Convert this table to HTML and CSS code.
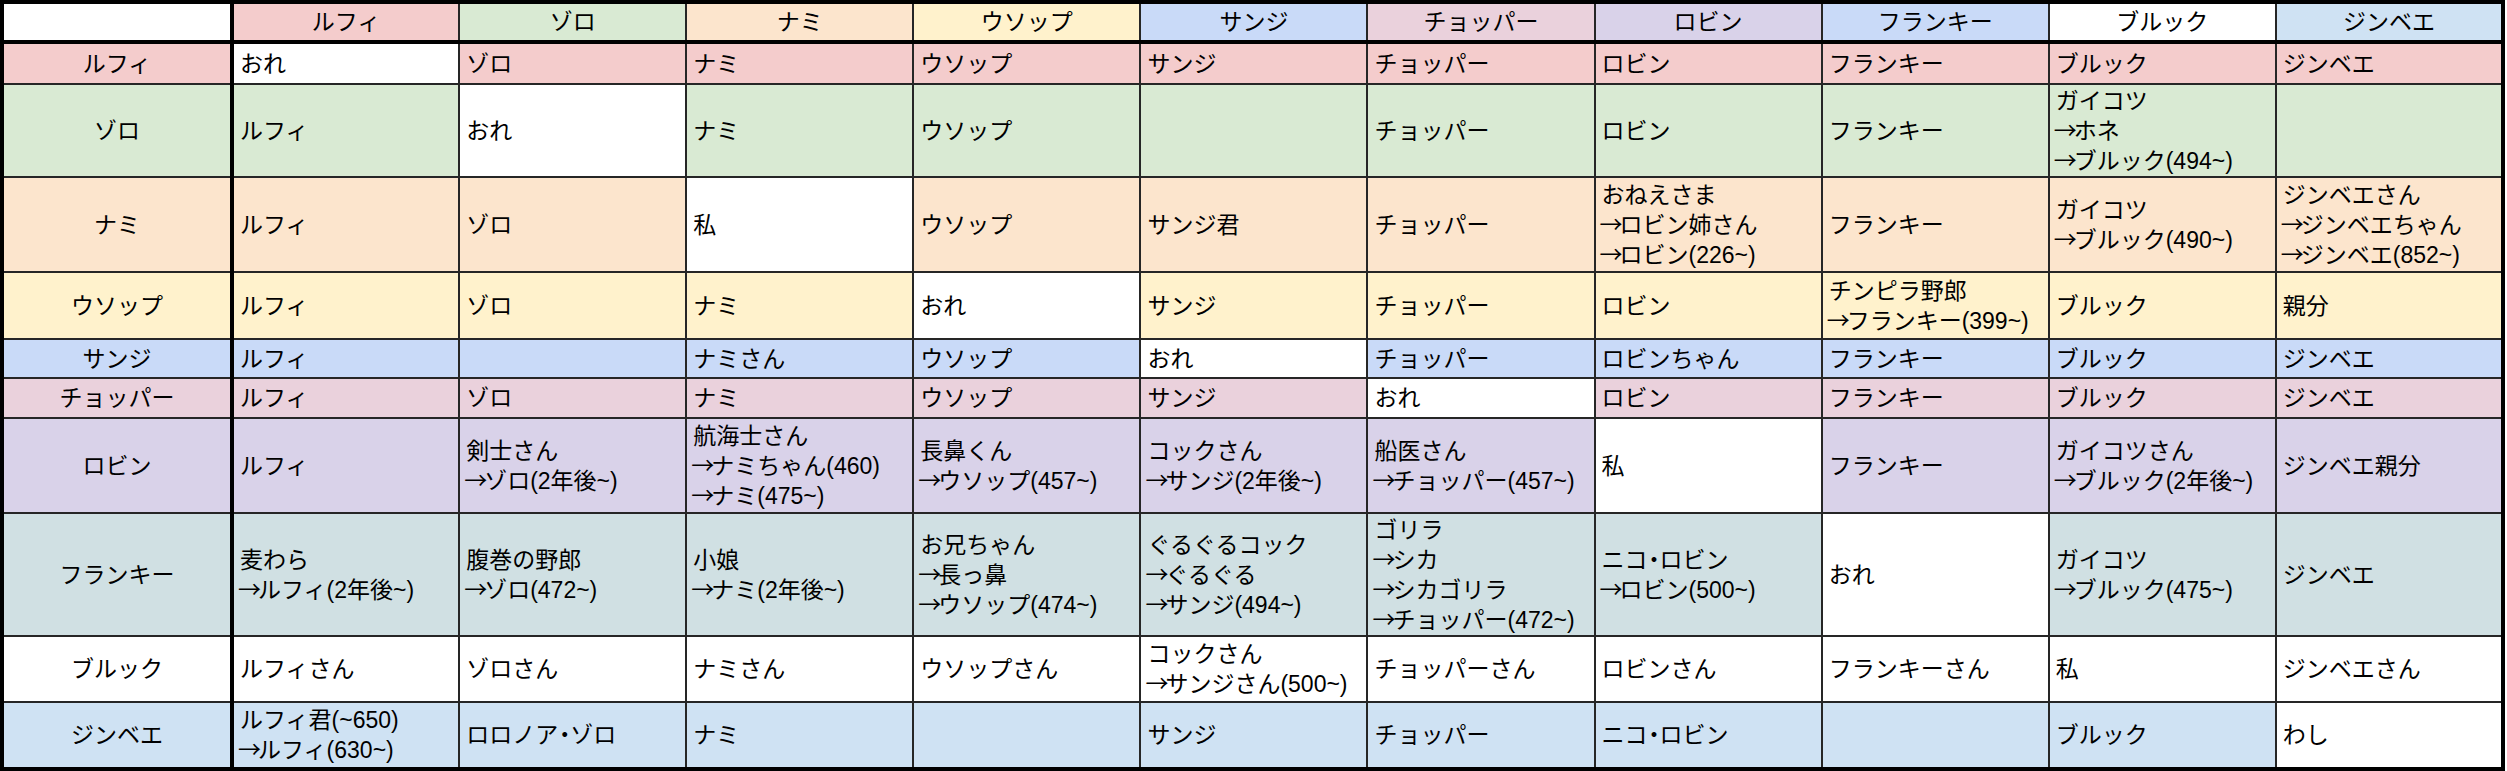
FILE: index.html
```html
<!DOCTYPE html>
<html lang="ja">
<head>
<meta charset="utf-8">
<title>呼び方表</title>
<link rel="stylesheet" href="styles.css">
</head>
<body>
<table class="grid">
  <colgroup>
    <col class="col-head">
    <col class="col"><col class="col"><col class="col"><col class="col"><col class="col">
    <col class="col"><col class="col"><col class="col"><col class="col"><col class="col">
  </colgroup>
  <thead>
    <tr class="h0">
      <th class="corner"></th>
      <th class="luffy">ルフィ</th>
      <th class="zoro">ゾロ</th>
      <th class="nami">ナミ</th>
      <th class="usopp">ウソップ</th>
      <th class="sanji">サンジ</th>
      <th class="chopper">チョッパー</th>
      <th class="robin">ロビン</th>
      <th class="franky-h">フランキー</th>
      <th class="brook">ブルック</th>
      <th class="jinbe">ジンベエ</th>
    </tr>
  </thead>
  <tbody>
    <tr class="h1 luffy">
      <th>ルフィ</th>
      <td class="self">おれ</td><td>ゾロ</td><td>ナミ</td><td>ウソップ</td><td>サンジ</td><td>チョッパー</td><td>ロビン</td><td>フランキー</td><td>ブルック</td><td>ジンベエ</td>
    </tr>
    <tr class="h2 zoro">
      <th>ゾロ</th>
      <td>ルフィ</td><td class="self">おれ</td><td>ナミ</td><td>ウソップ</td><td></td><td>チョッパー</td><td>ロビン</td><td>フランキー</td><td>ガイコツ<br><span class="ar">→</span>ホネ<br><span class="ar">→</span>ブルック(494~)</td><td></td>
    </tr>
    <tr class="h3 nami">
      <th>ナミ</th>
      <td>ルフィ</td><td>ゾロ</td><td class="self">私</td><td>ウソップ</td><td>サンジ君</td><td>チョッパー</td><td>おねえさま<br><span class="ar">→</span>ロビン姉さん<br><span class="ar">→</span>ロビン(226~)</td><td>フランキー</td><td>ガイコツ<br><span class="ar">→</span>ブルック(490~)</td><td>ジンベエさん<br><span class="ar">→</span>ジンベエちゃん<br><span class="ar">→</span>ジンベエ(852~)</td>
    </tr>
    <tr class="h4 usopp">
      <th>ウソップ</th>
      <td>ルフィ</td><td>ゾロ</td><td>ナミ</td><td class="self">おれ</td><td>サンジ</td><td>チョッパー</td><td>ロビン</td><td>チンピラ野郎<br><span class="ar">→</span>フランキー(399~)</td><td>ブルック</td><td>親分</td>
    </tr>
    <tr class="h5 sanji">
      <th>サンジ</th>
      <td>ルフィ</td><td></td><td>ナミさん</td><td>ウソップ</td><td class="self">おれ</td><td>チョッパー</td><td>ロビンちゃん</td><td>フランキー</td><td>ブルック</td><td>ジンベエ</td>
    </tr>
    <tr class="h6 chopper">
      <th>チョッパー</th>
      <td>ルフィ</td><td>ゾロ</td><td>ナミ</td><td>ウソップ</td><td>サンジ</td><td class="self">おれ</td><td>ロビン</td><td>フランキー</td><td>ブルック</td><td>ジンベエ</td>
    </tr>
    <tr class="h7 robin">
      <th>ロビン</th>
      <td>ルフィ</td><td>剣士さん<br><span class="ar">→</span>ゾロ(2年後~)</td><td>航海士さん<br><span class="ar">→</span>ナミちゃん(460)<br><span class="ar">→</span>ナミ(475~)</td><td>長鼻くん<br><span class="ar">→</span>ウソップ(457~)</td><td>コックさん<br><span class="ar">→</span>サンジ(2年後~)</td><td>船医さん<br><span class="ar">→</span>チョッパー(457~)</td><td class="self">私</td><td>フランキー</td><td>ガイコツさん<br><span class="ar">→</span>ブルック(2年後~)</td><td>ジンベエ親分</td>
    </tr>
    <tr class="h8 franky">
      <th>フランキー</th>
      <td>麦わら<br><span class="ar">→</span>ルフィ(2年後~)</td><td>腹巻の野郎<br><span class="ar">→</span>ゾロ(472~)</td><td>小娘<br><span class="ar">→</span>ナミ(2年後~)</td><td>お兄ちゃん<br><span class="ar">→</span>長っ鼻<br><span class="ar">→</span>ウソップ(474~)</td><td>ぐるぐるコック<br><span class="ar">→</span>ぐるぐる<br><span class="ar">→</span>サンジ(494~)</td><td>ゴリラ<br><span class="ar">→</span>シカ<br><span class="ar">→</span>シカゴリラ<br><span class="ar">→</span>チョッパー(472~)</td><td>ニコ<span class="dot">・</span>ロビン<br><span class="ar">→</span>ロビン(500~)</td><td class="self">おれ</td><td>ガイコツ<br><span class="ar">→</span>ブルック(475~)</td><td>ジンベエ</td>
    </tr>
    <tr class="h9 brook">
      <th>ブルック</th>
      <td>ルフィさん</td><td>ゾロさん</td><td>ナミさん</td><td>ウソップさん</td><td>コックさん<br><span class="ar">→</span>サンジさん(500~)</td><td>チョッパーさん</td><td>ロビンさん</td><td>フランキーさん</td><td class="self">私</td><td>ジンベエさん</td>
    </tr>
    <tr class="h10 jinbe">
      <th>ジンベエ</th>
      <td>ルフィ君(~650)<br><span class="ar">→</span>ルフィ(630~)</td><td>ロロノア<span class="dot">・</span>ゾロ</td><td>ナミ</td><td></td><td>サンジ</td><td>チョッパー</td><td>ニコ<span class="dot">・</span>ロビン</td><td></td><td>ブルック</td><td class="self">わし</td>
    </tr>
  </tbody>
</table>
</body>
</html>
```

FILE: styles.css
```css
html, body {
  margin: 0;
  padding: 0;
  background: #ffffff;
}

.grid {
  border-collapse: collapse;
  table-layout: fixed;
  width: 2505px;
  font-family: "Liberation Sans", "Noto Sans CJK JP", sans-serif;
  font-size: 23px;
  line-height: 28px;
  color: #000000;
  border: 4px solid #000000;
}

.col-head { width: 230px; }
.col { width: 227px; }

.grid th,
.grid td {
  border: 2px solid #262626;
  padding: 0 6px;
  vertical-align: middle;
  font-weight: normal;
  white-space: nowrap;
  overflow: hidden;
}

.grid th { text-align: center; }
.grid td { text-align: left; }

/* arrow sits tight against the following name */
.ar {
  font-family: "Noto Sans CJK JP", sans-serif;
  letter-spacing: -3px;
  margin-left: -2px;
}

/* narrow middle dot between name parts */
.dot { letter-spacing: -6px; margin-left: -5px; }

.grid thead th { border-bottom: 4px solid #000000; }
.grid thead th.corner,
.grid tbody th { border-right: 4px solid #000000; }

/* row heights */
.h0 { height: 40px; }
.h1 { height: 42px; }
.h2 { height: 93px; }
.h3 { height: 95px; }
.h4 { height: 67px; }
.h5 { height: 39px; }
.h6 { height: 40px; }
.h7 { height: 95px; }
.h8 { height: 123px; }
.h9 { height: 66px; }
.h10 { height: 67px; }

/* header row colours */
.grid thead th.corner { background: #ffffff; }
.grid thead th.luffy { background: #f4cccc; }
.grid thead th.zoro { background: #d9ead3; }
.grid thead th.nami { background: #fce5cd; }
.grid thead th.usopp { background: #fff2cc; }
.grid thead th.sanji { background: #c9daf8; }
.grid thead th.chopper { background: #ead1dc; }
.grid thead th.robin { background: #d9d2e9; }
.grid thead th.franky-h { background: #c9daf8; }
.grid thead th.brook { background: #ffffff; }
.grid thead th.jinbe { background: #cfe2f3; }

/* body row colours */
.grid tbody tr.luffy > * { background: #f4cccc; }
.grid tbody tr.zoro > * { background: #d9ead3; }
.grid tbody tr.nami > * { background: #fce5cd; }
.grid tbody tr.usopp > * { background: #fff2cc; }
.grid tbody tr.sanji > * { background: #c9daf8; }
.grid tbody tr.chopper > * { background: #ead1dc; }
.grid tbody tr.robin > * { background: #d9d2e9; }
.grid tbody tr.franky > * { background: #d0e0e3; }
.grid tbody tr.brook > * { background: #ffffff; }
.grid tbody tr.jinbe > * { background: #cfe2f3; }

.grid tbody tr td.self { background: #ffffff; }
```
